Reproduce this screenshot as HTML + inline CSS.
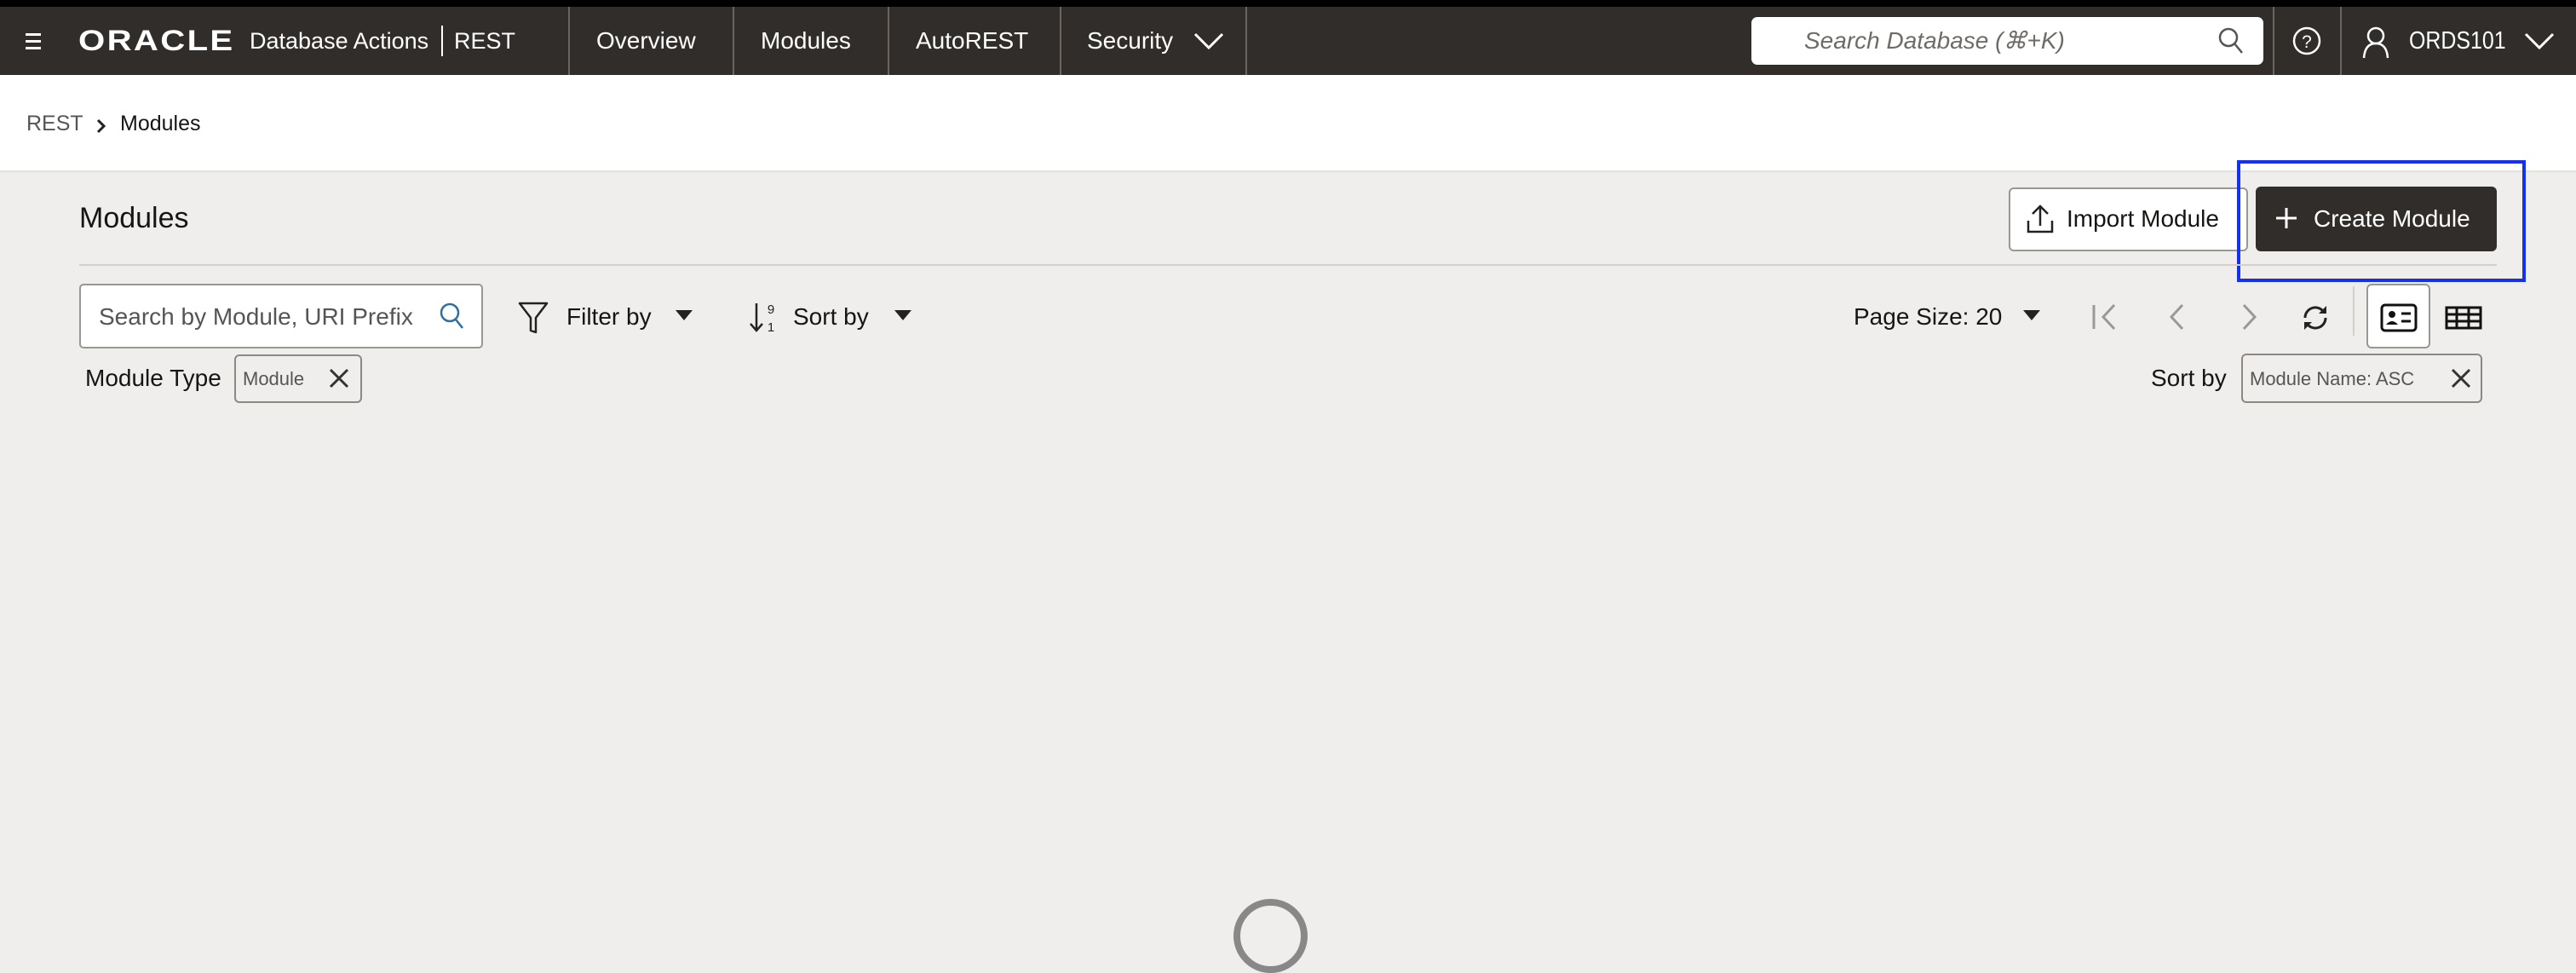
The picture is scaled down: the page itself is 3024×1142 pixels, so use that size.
<!DOCTYPE html>
<html><head><meta charset="utf-8"><style>
*{margin:0;padding:0;box-sizing:border-box}
body{width:3024px;height:1112px;overflow:hidden;font-family:"Liberation Sans",sans-serif;background:#f0eeec;position:relative}
.a{position:absolute}
.top{left:0;top:0;width:3024px;height:8px;background:#000}
.nav{left:0;top:8px;width:3024px;height:80px;background:#312d2a;color:#fff}
.nt{position:absolute;top:0;height:80px;line-height:80px;font-size:28px;color:#fff;white-space:nowrap}
.sep{position:absolute;top:0;width:2px;height:80px;background:#6b6560}
.crumb{left:0;top:88px;width:3024px;height:114px;background:#fff;border-bottom:2px solid #e4e2df}
.t{position:absolute;white-space:nowrap}
</style></head><body>
<div class="a top"></div>
<div class="a nav">
  <div class="a" style="left:30px;top:31px;width:18px;height:3px;background:#fff"></div>
  <div class="a" style="left:30px;top:39px;width:18px;height:3px;background:#fff"></div>
  <div class="a" style="left:30px;top:47px;width:18px;height:3px;background:#fff"></div>
  <div class="nt" style="left:92px;font-size:34px;font-weight:bold;letter-spacing:2px;transform:scaleX(1.18);transform-origin:left">ORACLE</div>
  <div class="nt" style="left:293px;font-size:27px">Database Actions</div>
  <div class="a" style="left:518px;top:22px;width:2px;height:36px;background:#fff"></div>
  <div class="nt" style="left:533px;font-size:27px">REST</div>
  <div class="sep" style="left:667px"></div>
  <div class="nt" style="left:700px">Overview</div>
  <div class="sep" style="left:860px"></div>
  <div class="nt" style="left:893px">Modules</div>
  <div class="sep" style="left:1042px"></div>
  <div class="nt" style="left:1075px">AutoREST</div>
  <div class="sep" style="left:1244px"></div>
  <div class="nt" style="left:1276px">Security</div>
  <svg class="a" style="left:1400px;top:28px" width="38" height="24"><path d="M3 4 L19 20 L35 4" stroke="#fff" stroke-width="3" fill="none"/></svg>
  <div class="sep" style="left:1462px"></div>
  <div class="a" style="left:2056px;top:12px;width:601px;height:56px;background:#fff;border-radius:7px"></div>
  <div class="nt" style="left:2118px;color:#6f6b68;font-style:italic;font-size:28px">Search Database (⌘+K)</div>
  <svg class="a" style="left:2603px;top:23px" width="32" height="34"><circle cx="13" cy="13" r="10" stroke="#555" stroke-width="2.5" fill="none"/><path d="M20 20 L29 31" stroke="#555" stroke-width="2.5"/></svg>
  <div class="sep" style="left:2668px"></div>
  <svg class="a" style="left:2690px;top:22px" width="36" height="36"><circle cx="18" cy="18" r="15" stroke="#fff" stroke-width="2.5" fill="none"/><text x="18" y="26" fill="#fff" font-size="21" text-anchor="middle" font-family="Liberation Sans">?</text></svg>
  <div class="sep" style="left:2747px"></div>
  <svg class="a" style="left:2772px;top:22px" width="34" height="40"><circle cx="17" cy="12" r="9" stroke="#fff" stroke-width="2.5" fill="none"/><path d="M3 38 C4 25 10 21 17 21 C24 21 30 25 31 38" stroke="#fff" stroke-width="2.5" fill="none"/></svg>
  <div class="nt" style="left:2828px;font-size:29px;transform:scaleX(0.86);transform-origin:left">ORDS101</div>
  <svg class="a" style="left:2962px;top:28px" width="38" height="24"><path d="M3 4 L19 20 L35 4" stroke="#fff" stroke-width="3" fill="none"/></svg>
</div>
<div class="a crumb">
  <div class="t" style="left:31px;top:43px;font-size:25px;color:#555">REST</div>
  <svg class="a" style="left:112px;top:51px" width="14" height="18"><path d="M3 2 L10 9 L3 16" stroke="#222" stroke-width="3" fill="none"/></svg>
  <div class="t" style="left:141px;top:43px;font-size:25px;color:#161513">Modules</div>
</div>

<div class="t" style="left:93px;top:237px;font-size:34px;color:#161513">Modules</div>
<div class="a" style="left:2358px;top:220px;width:281px;height:75px;background:#fff;border:2px solid #9a9692;border-radius:6px"></div>
<svg class="a" style="left:2378px;top:239px" width="34" height="36"><path d="M17 26 V3 M8 12 L17 3 L26 12 M3 20 V33 H31 V20" stroke="#222" stroke-width="2.5" fill="none"/></svg>
<div class="t" style="left:2426px;top:241px;font-size:28px;color:#161513">Import Module</div>
<div class="a" style="left:2648px;top:219px;width:283px;height:76px;background:#312d2a;border-radius:6px"></div>
<svg class="a" style="left:2670px;top:242px" width="28" height="28"><path d="M14 2 V26 M2 14 H26" stroke="#fff" stroke-width="3"/></svg>
<div class="t" style="left:2716px;top:241px;font-size:28px;color:#fff">Create Module</div>
<div class="a" style="left:2626px;top:188px;width:339px;height:143px;border:4px solid #1430f5"></div>
<div class="a" style="left:93px;top:310px;width:2838px;height:2px;background:#d3d0cc"></div>

<div class="a" style="left:93px;top:333px;width:474px;height:76px;background:#fff;border:2px solid #9a9692;border-radius:5px"></div>
<div class="t" style="left:116px;top:356px;font-size:28px;color:#555">Search by Module, URI Prefix</div>
<svg class="a" style="left:515px;top:354px" width="34" height="36"><circle cx="13" cy="13" r="10" stroke="#2f6ea0" stroke-width="2.5" fill="none"/><path d="M20 21 L28 31" stroke="#2f6ea0" stroke-width="2.5"/></svg>
<svg class="a" style="left:607px;top:353px" width="38" height="40"><path d="M3 3 H35 L22 20 V37 L16 35 V20 Z" stroke="#222" stroke-width="2.5" fill="none" stroke-linejoin="round"/></svg>
<div class="t" style="left:665px;top:356px;font-size:28px;color:#161513">Filter by</div>
<svg class="a" style="left:792px;top:363px" width="22" height="14"><path d="M1 1 H21 L11 13 Z" fill="#222"/></svg>
<svg class="a" style="left:878px;top:352px" width="36" height="40"><path d="M10 4 V36 M3 28 L10 36 L17 28" stroke="#222" stroke-width="2.5" fill="none"/><text x="27" y="16" font-size="15" font-family="Liberation Sans" fill="#222" text-anchor="middle">9</text><text x="27" y="37" font-size="15" font-family="Liberation Sans" fill="#222" text-anchor="middle">1</text></svg>
<div class="t" style="left:931px;top:356px;font-size:28px;color:#161513">Sort by</div>
<svg class="a" style="left:1049px;top:363px" width="22" height="14"><path d="M1 1 H21 L11 13 Z" fill="#222"/></svg>

<div class="t" style="left:100px;top:428px;font-size:28px;color:#161513">Module Type</div>
<div class="a" style="left:275px;top:416px;width:150px;height:57px;border:2px solid #8c8884;border-radius:6px"></div>
<div class="t" style="left:285px;top:432px;font-size:22px;color:#555">Module</div>
<svg class="a" style="left:385px;top:431px" width="26" height="26"><path d="M3 3 L23 23 M23 3 L3 23" stroke="#333" stroke-width="3"/></svg>

<div class="t" style="left:2176px;top:356px;font-size:28px;color:#161513">Page Size: 20</div>
<svg class="a" style="left:2374px;top:363px" width="22" height="14"><path d="M1 1 H21 L11 13 Z" fill="#222"/></svg>
<svg class="a" style="left:2455px;top:356px" width="34" height="32"><path d="M3 2 V30 M27 2 L14 16 L27 30" stroke="#999" stroke-width="3" fill="none"/></svg>
<svg class="a" style="left:2544px;top:356px" width="22" height="32"><path d="M18 2 L5 16 L18 30" stroke="#999" stroke-width="3" fill="none"/></svg>
<svg class="a" style="left:2630px;top:356px" width="22" height="32"><path d="M4 2 L17 16 L4 30" stroke="#999" stroke-width="3" fill="none"/></svg>
<svg class="a" style="left:2700px;top:356px" width="36" height="34"><path d="M6 17 A12 12 0 0 1 27 9 M30 17 A12 12 0 0 1 9 25" stroke="#222" stroke-width="3" fill="none"/><path d="M31 3 V12 H22 Z M5 31 V22 H14 Z" fill="#222"/></svg>
<div class="a" style="left:2762px;top:336px;width:2px;height:58px;background:#d3d0cc"></div>
<div class="a" style="left:2778px;top:333px;width:75px;height:76px;background:#fff;border:2px solid #9a9692;border-radius:6px"></div>
<svg class="a" style="left:2794px;top:356px" width="44" height="34"><rect x="2" y="2" width="40" height="30" rx="4" stroke="#111" stroke-width="3" fill="none"/><circle cx="14" cy="13" r="4" fill="#111"/><path d="M7 25 Q14 17 21 25 Z" fill="#111"/><path d="M25 12 H36 M25 21 H36" stroke="#111" stroke-width="3"/></svg>
<svg class="a" style="left:2870px;top:359px" width="44" height="28"><rect x="2" y="2" width="40" height="24" stroke="#111" stroke-width="3" fill="none"/><path d="M2 10 H42 M2 18 H42 M14 2 V26 M28 2 V26" stroke="#111" stroke-width="3"/></svg>

<div class="t" style="left:2525px;top:428px;font-size:28px;color:#161513">Sort by</div>
<div class="a" style="left:2631px;top:415px;width:283px;height:58px;border:2px solid #8c8884;border-radius:6px"></div>
<div class="t" style="left:2641px;top:432px;font-size:22px;color:#555">Module Name: ASC</div>
<svg class="a" style="left:2876px;top:431px" width="26" height="26"><path d="M3 3 L23 23 M23 3 L3 23" stroke="#333" stroke-width="3"/></svg>

<div class="a" style="left:1448px;top:1055px;width:87px;height:87px;border:8px solid #888;border-radius:50%"></div>
</body></html>
